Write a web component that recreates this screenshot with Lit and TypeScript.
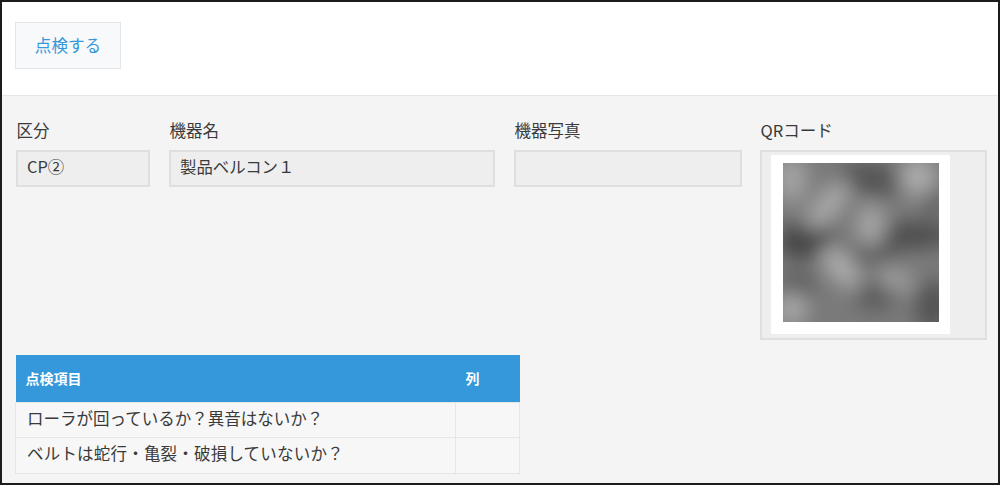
import { LitElement, html, css, svg } from 'lit';
import { customElement } from 'lit/decorators.js';

// blobs of the blurred QR image: x, y, rx, ry, rotation, grey
const QR_BLOBS: [number, number, number, number, number, string][] = [
  [23, 78, 30, 18, 0, '#454545'],
  [90, 16, 34, 16, 10, '#555555'],
  [130, 72, 40, 13, 0, '#4c4c4c'],
  [150, 143, 18, 26, 0, '#525252'],
  [92, 132, 20, 16, 0, '#5c5c5c'],
  [14, 122, 20, 14, 0, '#5e5e5e'],
  [90, 92, 30, 10, 0, '#5e5e5e'],
  [150, 38, 9, 14, 0, '#555555'],
  [45, 42, 30, 12, -50, '#aaaaaa'],
  [88, 62, 14, 20, 0, '#a8a8a8'],
  [135, 14, 18, 19, 0, '#adadad'],
  [58, 104, 26, 13, 50, '#adadad'],
  [8, 146, 16, 16, 0, '#aaaaaa'],
  [112, 116, 20, 10, 20, '#a2a2a2'],
  [8, 16, 16, 24, 0, '#a4a4a4'],
];

const ROWS = ['ローラが回っているか？異音はないか？', 'ベルトは蛇行・亀裂・破損していないか？'];

@customElement('app-root')
export class AppRoot extends LitElement {
  static styles = css`
    :host {
      display: block;
      width: 1000px;
      height: 485px;
      font-family: 'Noto Sans CJK JP', 'Noto Sans', sans-serif;
      color: #3a3a3a;
    }
    .frame {
      box-sizing: border-box;
      width: 1000px;
      height: 485px;
      border: 2px solid #1c1c1c;
      background: #f4f4f4;
      display: flex;
      flex-direction: column;
      overflow: hidden;
    }
    .toolbar {
      box-sizing: border-box;
      height: 94px;
      flex: none;
      padding: 20px 0 0 13px;
      background: #fff;
      border-bottom: 1px solid #e3e7e8;
    }
    .btn {
      box-sizing: border-box;
      width: 106px;
      height: 47px;
      display: flex;
      align-items: center;
      justify-content: center;
      background: #f7f9fa;
      border: 1px solid #e3e7e8;
      color: #3498db;
      font-size: 16.6px;
      line-height: 1;
    }
    .content {
      flex: 1;
      padding: 21px 0 0 14px;
      display: flex;
      flex-direction: column;
    }
    .fields {
      display: flex;
      gap: 19px;
      height: 238px;
      flex: none;
    }
    .field {
      flex: none;
    }
    .w-kind {
      width: 134px;
    }
    .w-name {
      width: 326px;
    }
    .w-photo {
      width: 228px;
    }
    .w-qr {
      width: 227px;
      margin-left: -1px;
    }
    .field label {
      display: block;
      height: 33px;
      padding-left: 0.5px;
      font-size: 16.5px;
      line-height: 27px;
    }
    .val {
      box-sizing: border-box;
      height: 37px;
      padding: 0 9px;
      background: #eeeeee;
      border: 2px solid #dfdfdf;
      font-size: 16.4px;
      line-height: 28px;
    }
    .qr-box {
      box-sizing: border-box;
      height: 190px;
      padding: 3px 9px;
      background: #eeeeee;
      border: 2px solid #dfdfdf;
    }
    .qr-paper {
      box-sizing: border-box;
      width: 179px;
      height: 179px;
      padding: 8px 12px;
      background: #fff;
    }
    .qr-paper svg {
      display: block;
      width: 156px;
      height: 159px;
    }
    table {
      width: 505px;
      margin-left: -1px;
      border-collapse: collapse;
      table-layout: fixed;
      font-size: 16.5px;
    }
    th {
      box-sizing: border-box;
      height: 47px;
      padding: 0 10px;
      background: #3498db;
      color: #fff;
      font-size: 14px;
      font-weight: 700;
      text-align: left;
    }
    th.col {
      width: 64px;
    }
    td {
      box-sizing: border-box;
      height: 35px;
      padding: 0 10px 3px 11px;
      border: 1px solid #e3e7e8;
      background: #f7f7f7;
      line-height: 1;
    }
    tr:last-child td {
      height: 36px;
      letter-spacing: 0.2px;
    }
  `;

  render() {
    return html`
      <div class="frame">
        <div class="toolbar"><div class="btn">点検する</div></div>
        <div class="content">
          <div class="fields">
            <div class="field w-kind">
              <label>区分</label>
              <div class="val">CP②</div>
            </div>
            <div class="field w-name">
              <label>機器名</label>
              <div class="val">製品ベルコン１</div>
            </div>
            <div class="field w-photo">
              <label>機器写真</label>
              <div class="val"></div>
            </div>
            <div class="field w-qr">
              <label>QRコード</label>
              <div class="qr-box">
                <div class="qr-paper">
                  <svg viewBox="0 0 156 159">
                    <defs>
                      <filter id="blur" x="-20%" y="-20%" width="140%" height="140%">
                        <feGaussianBlur stdDeviation="10"></feGaussianBlur>
                      </filter>
                      <clipPath id="clip"><rect width="156" height="159"></rect></clipPath>
                    </defs>
                    <rect width="156" height="159" fill="#7a7a7a"></rect>
                    <g clip-path="url(#clip)">
                      <g filter="url(#blur)">
                        ${QR_BLOBS.map(
                          ([x, y, rx, ry, rot, c]) =>
                            svg`<ellipse cx=${x} cy=${y} rx=${rx} ry=${ry} fill=${c} transform="rotate(${rot} ${x} ${y})"></ellipse>`,
                        )}
                      </g>
                    </g>
                  </svg>
                </div>
              </div>
            </div>
          </div>
          <table>
            <thead>
              <tr><th>点検項目</th><th class="col">列</th></tr>
            </thead>
            <tbody>
              ${ROWS.map((r) => html`<tr><td>${r}</td><td></td></tr>`)}
            </tbody>
          </table>
        </div>
      </div>
    `;
  }
}
